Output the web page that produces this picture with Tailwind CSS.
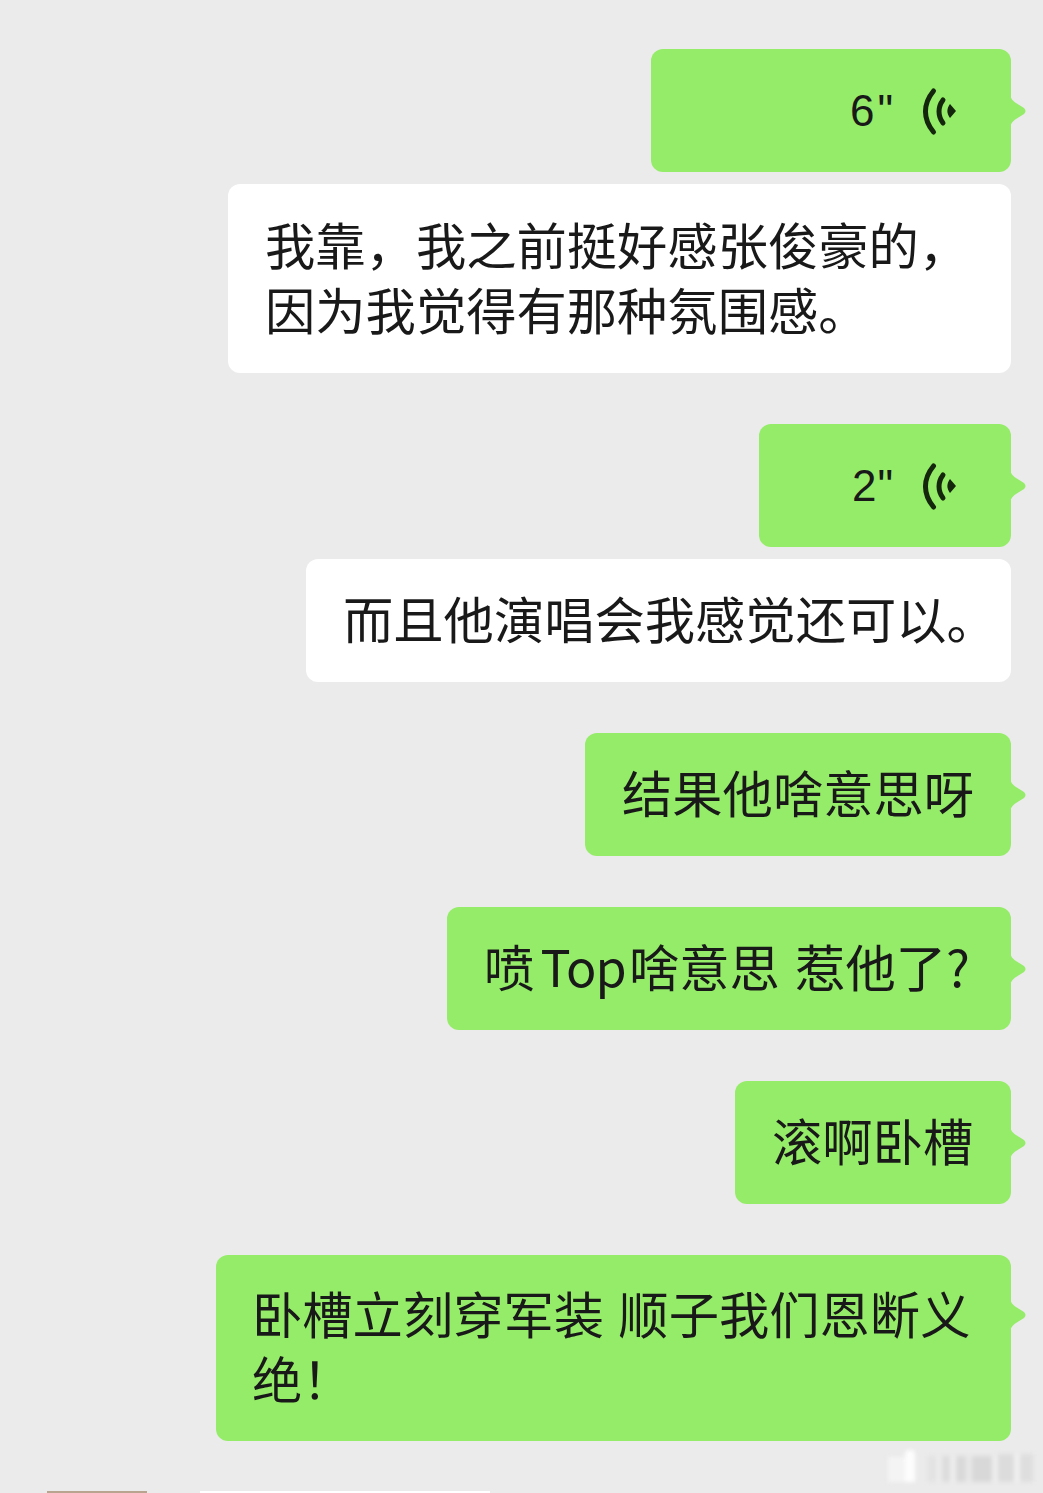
<!DOCTYPE html>
<html lang="zh-CN">

<head>
    <meta charset="UTF-8">
    <meta name="viewport" content="width=device-width, initial-scale=1.0">
    <title>Chat</title>
    <script src="https://cdn.jsdelivr.net/npm/@tailwindcss/browser@4"></script>
</head>

<body class="relative h-[1493px] overflow-hidden bg-[#ebebeb] font-['Noto_Sans_CJK_SC','Liberation_Sans',sans-serif] text-[50.3px] leading-[65px] text-[#191919]">
    <div class="flex flex-col items-end pt-[49px] pr-[32px]">
        <!-- voice 6s -->
        <div class="relative flex h-[123px] w-[360px] items-center justify-end rounded-[12px] bg-[#95ec69] pr-[52px]">
            <span class="mr-[25px] font-['Liberation_Sans',sans-serif] text-[44px] leading-none tracking-[3px]">6"</span>
            <svg width="38" height="50" viewBox="0 0 38 50" fill="none" class="text-[#14260c]">
                <path d="M12.5 5C1.8 18 1.8 33 12.5 46" stroke="currentColor" stroke-width="5" stroke-linecap="round" />
                <path d="M22 14C16.7 21 16.7 30 22 37" stroke="currentColor" stroke-width="5" stroke-linecap="round" />
                <path d="M29 18L35 25L29 32C25.5 27 25.5 23 29 18Z" fill="currentColor" />
            </svg>
            <svg width="17" height="36" viewBox="0 0 17 36" class="absolute top-1/2 right-[-16px] -translate-y-1/2 text-[#95ec69]">
                <path d="M0 0C0 5 3 8 6 10L14 15Q17 18 14 21L6 26C3 28 0 31 0 36Z" fill="currentColor" />
            </svg>
        </div>
        <div class="mt-[12px] h-[189px] w-[783px] rounded-[12px] bg-white pt-[27px] pl-[37px]">我靠，我之前挺好感张俊豪的，<br>因为我觉得有那种氛围感。</div>

        <!-- voice 2s -->
        <div class="relative mt-[51px] flex h-[123px] w-[252px] items-center justify-end rounded-[12px] bg-[#95ec69] pr-[52px]">
            <span class="mr-[27px] font-['Liberation_Sans',sans-serif] text-[44px] leading-none tracking-[1px]">2"</span>
            <svg width="38" height="50" viewBox="0 0 38 50" fill="none" class="text-[#14260c]">
                <path d="M12.5 5C1.8 18 1.8 33 12.5 46" stroke="currentColor" stroke-width="5" stroke-linecap="round" />
                <path d="M22 14C16.7 21 16.7 30 22 37" stroke="currentColor" stroke-width="5" stroke-linecap="round" />
                <path d="M29 18L35 25L29 32C25.5 27 25.5 23 29 18Z" fill="currentColor" />
            </svg>
            <svg width="17" height="36" viewBox="0 0 17 36" class="absolute top-1/2 right-[-16px] -translate-y-1/2 text-[#95ec69]">
                <path d="M0 0C0 5 3 8 6 10L14 15Q17 18 14 21L6 26C3 28 0 31 0 36Z" fill="currentColor" />
            </svg>
        </div>
        <div class="mt-[12px] h-[123px] w-[705px] whitespace-nowrap rounded-[12px] bg-white pt-[26px] pl-[37px]">而且他演唱会我感觉还可以。</div>

        <div class="relative mt-[51px] h-[123px] w-[426px] whitespace-nowrap rounded-[12px] bg-[#95ec69] pt-[26px] pl-[37px]">结果他啥意思呀
            <svg width="17" height="36" viewBox="0 0 17 36" class="absolute top-1/2 right-[-16px] -translate-y-1/2 text-[#95ec69]">
                <path d="M0 0C0 5 3 8 6 10L14 15Q17 18 14 21L6 26C3 28 0 31 0 36Z" fill="currentColor" />
            </svg>
        </div>
        <div class="relative mt-[51px] h-[123px] w-[564px] whitespace-nowrap rounded-[12px] bg-[#95ec69] pt-[26px] pl-[37px]">喷<span class="[word-spacing:-5px]"> </span><span class="tracking-[-1px]">Top</span><span class="[word-spacing:-8px]"> </span>啥意思<span class="[word-spacing:4px]"> </span>惹他了?
            <svg width="17" height="36" viewBox="0 0 17 36" class="absolute top-1/2 right-[-16px] -translate-y-1/2 text-[#95ec69]">
                <path d="M0 0C0 5 3 8 6 10L14 15Q17 18 14 21L6 26C3 28 0 31 0 36Z" fill="currentColor" />
            </svg>
        </div>
        <div class="relative mt-[51px] h-[123px] w-[276px] whitespace-nowrap rounded-[12px] bg-[#95ec69] pt-[26px] pl-[37px]">滚啊卧槽
            <svg width="17" height="36" viewBox="0 0 17 36" class="absolute top-1/2 right-[-16px] -translate-y-1/2 text-[#95ec69]">
                <path d="M0 0C0 5 3 8 6 10L14 15Q17 18 14 21L6 26C3 28 0 31 0 36Z" fill="currentColor" />
            </svg>
        </div>
        <div class="relative mt-[51px] h-[186px] w-[795px] rounded-[12px] bg-[#95ec69] pt-[25px] pl-[36px]">卧槽立刻穿军装<span class="[word-spacing:3px]"> </span>顺子我们恩断义<br>绝！
            <svg width="17" height="36" viewBox="0 0 17 36" class="absolute top-[42px] right-[-16px] text-[#95ec69]">
                <path d="M0 0C0 5 3 8 6 10L14 15Q17 18 14 21L6 26C3 28 0 31 0 36Z" fill="currentColor" />
            </svg>
        </div>
    </div>

    <!-- next row peeking in at the bottom edge -->
    <div class="absolute bottom-0 left-[47px] h-[2px] w-[100px] bg-[#b9a48f]"></div>
    <div class="absolute bottom-0 left-[200px] h-[2px] w-[290px] bg-white"></div>

    <!-- blurred watermark -->
    <div class="absolute top-[1450px] left-[888px] flex h-[32px] items-end blur-[2px]">
        <span class="h-[25px] w-[17px] bg-[#f4f4f4]"></span>
        <span class="h-[32px] w-[10px] rounded-t-[4px] bg-[#fdfdfd]"></span>
        <span class="ml-[13px] h-[26px] w-[8px] bg-[#e2e2e2]"></span>
        <span class="h-[26px] w-[6px] bg-[#ececec]"></span>
        <span class="h-[26px] w-[8px] bg-[#dcdcdc]"></span>
        <span class="h-[26px] w-[6px] bg-[#eeeeee]"></span>
        <span class="h-[26px] w-[10px] bg-[#d9d9d9]"></span>
        <span class="h-[26px] w-[6px] bg-[#e8e8e8]"></span>
        <span class="h-[26px] w-[20px] bg-[#d8d8d8]"></span>
        <span class="h-[26px] w-[6px] bg-[#eeeeee]"></span>
        <span class="h-[28px] w-[16px] bg-[#dcdcdc]"></span>
        <span class="h-[28px] w-[6px] bg-[#f0f0f0]"></span>
        <span class="h-[28px] w-[13px] bg-[#dedede]"></span>
    </div>
</body>

</html>
